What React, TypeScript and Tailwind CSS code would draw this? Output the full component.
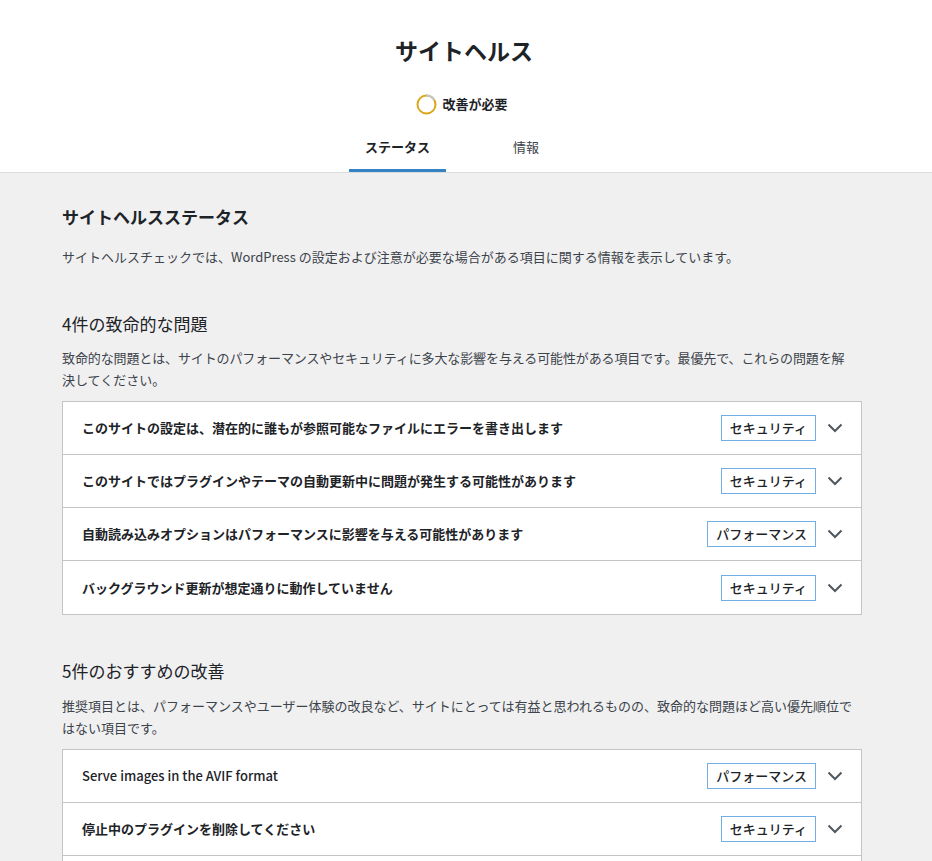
import React from 'react';

type Issue = { title: string; badge: string; latin?: boolean };

const critical: Issue[] = [
  { title: 'このサイトの設定は、潜在的に誰もが参照可能なファイルにエラーを書き出します', badge: 'セキュリティ' },
  { title: 'このサイトではプラグインやテーマの自動更新中に問題が発生する可能性があります', badge: 'セキュリティ' },
  { title: '自動読み込みオプションはパフォーマンスに影響を与える可能性があります', badge: 'パフォーマンス' },
  { title: 'バックグラウンド更新が想定通りに動作していません', badge: 'セキュリティ' },
];

const recommended: Issue[] = [
  { title: 'Serve images in the AVIF format', badge: 'パフォーマンス', latin: true },
  { title: '停止中のプラグインを削除してください', badge: 'セキュリティ' },
  { title: '停止中のテーマを削除してください', badge: 'セキュリティ' },
];

const Chevron = () => (
  <svg width="16" height="10" viewBox="0 0 16 10" className="shrink-0">
    <polyline points="1.5,1.5 8,8 14.5,1.5" fill="none" stroke="#50575e" strokeWidth="2" />
  </svg>
);

const IssueRow: React.FC<{ issue: Issue }> = ({ issue }) => (
  <div className="flex h-[53px] items-center border-b border-[#c3c4c7] pl-[19px] pr-[17px] last:border-b-0">
    <span
      className={
        issue.latin
          ? 'flex-1 text-[13px] font-medium text-[#1d2327]'
          : 'flex-1 text-[13px] font-semibold text-[#1d2327]'
      }
    >
      {issue.title}
    </span>
    <span className="border border-[#72aee6] px-2 text-[13px] leading-[24px] font-medium text-[#1d2327]">
      {issue.badge}
    </span>
    <span className="ml-[10px] flex w-[18px] justify-center">
      <Chevron />
    </span>
  </div>
);

export default function App() {
  return (
    <div
      className="h-[861px] overflow-hidden bg-[#f0f0f1] text-[#3c434a]"
      style={{ fontFamily: '"Noto Sans CJK JP", "Noto Sans", sans-serif' }}
    >
      {/* Header */}
      <div className="border-b border-[#dcdcde] bg-white pt-[35px]">
        <h1 className="pr-[4px] text-center text-[23px] leading-[30px] font-semibold text-[#1d2327]">サイトヘルス</h1>
        <div className="mt-[29px] flex h-[20px] items-center justify-center gap-[5px] pr-[8px]">
          <svg width="21" height="21" viewBox="0 0 21 21">
            <circle cx="10.5" cy="10.5" r="9" fill="none" stroke="#dba617" strokeWidth="2" />
            <path d="M10.5 1.5 A9 9 0 0 1 18.3 6" fill="none" stroke="#c3c4c7" strokeWidth="2" />
          </svg>
          <span className="text-[13px] font-semibold text-[#1d2327]">改善が必要</span>
        </div>
        <div className="mt-[10px] flex justify-center gap-[51px] pr-[28px]">
          <div className="flex h-[48px] items-center border-b-[3px] border-[#3582c4] px-4 text-[13px] font-semibold text-[#1d2327]">
            ステータス
          </div>
          <div className="flex h-[48px] items-center border-b-[3px] border-transparent px-4 text-[13px] text-[#3c434a]">
            情報
          </div>
        </div>
      </div>

      {/* Content */}
      <div className="ml-[62px] w-[800px] pt-[33px] pb-10">
        <h2 className="text-[17px] leading-[22px] font-semibold text-[#1d2327]">サイトヘルスステータス</h2>
        <p className="mt-[18px] text-[13px] leading-[22px]">
          サイトヘルスチェックでは、WordPress の設定および注意が必要な場合がある項目に関する情報を表示しています。
        </p>

        <h3 className="mt-[45px] text-[17px] leading-[22px] text-[#1d2327]">4件の致命的な問題</h3>
        <p className="mt-[12px] text-[13px] leading-[22px]">
          <span className="whitespace-nowrap tracking-[-0.12px]">
            致命的な問題とは、サイトのパフォーマンスやセキュリティに多大な影響を与える可能性がある項目です。最優先で、これらの問題を解
          </span>
          <br />
          決してください。
        </p>
        <div className="mt-[10px] border border-[#c3c4c7] bg-white">
          {critical.map((issue, i) => (
            <IssueRow key={i} issue={issue} />
          ))}
        </div>

        <h3 className="mt-[45px] text-[17px] leading-[22px] text-[#1d2327]">5件のおすすめの改善</h3>
        <p className="mt-[13px] text-[13px] leading-[22px]">
          推奨項目とは、パフォーマンスやユーザー体験の改良など、サイトにとっては有益と思われるものの、致命的な問題ほど高い優先順位ではない項目です。
        </p>
        <div className="mt-[10px] border border-[#c3c4c7] bg-white">
          {recommended.map((issue, i) => (
            <IssueRow key={i} issue={issue} />
          ))}
        </div>
      </div>
    </div>
  );
}
